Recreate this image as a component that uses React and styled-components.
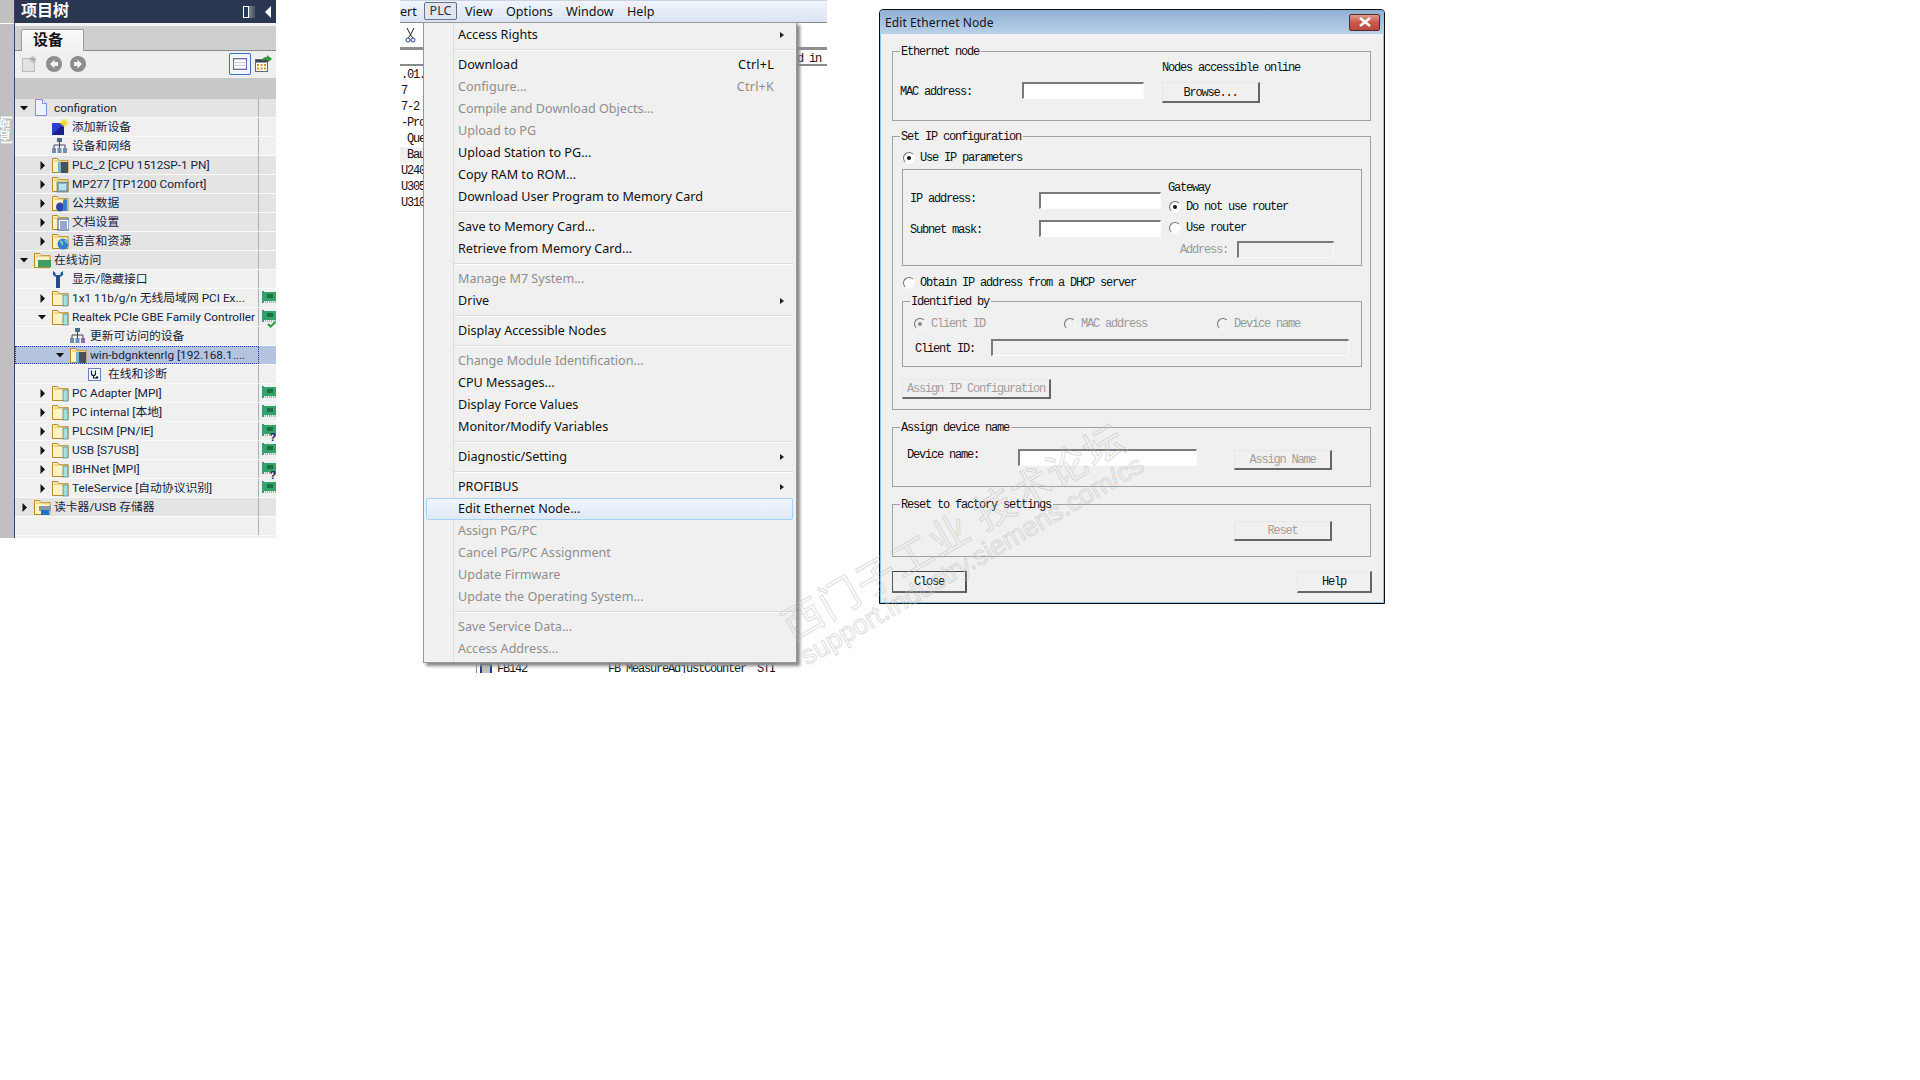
import React from 'react';
import styled, { createGlobalStyle } from 'styled-components';

const GlobalStyle = createGlobalStyle`
  html, body { margin: 0; padding: 0; background: #fff; }
  * { box-sizing: border-box; }
`;

const UI_FONT = `"Noto Sans", "Noto Sans CJK SC", sans-serif`;
const TREE_FONT = `Roboto, "Noto Sans CJK SC", sans-serif`;
const OLD_FONT = `"Liberation Mono", "Noto Sans CJK SC", monospace`;

// ---- small drawings ----

const Triangle = ({ open }) => (
  <svg width="9" height="9" viewBox="0 0 9 9">
    {open ? <path d="M0 2h8L4 6.500z" fill="#111" /> : <path d="M2.500 0v9L7 4.500z" fill="#111" />}
  </svg>
);

const Inner = ({ kind }) => {
  switch (kind) {
    case 'cpu':
      return <><rect x="6" y="6" width="10" height="11" fill="#46525e" /><rect x="6" y="6" width="3" height="11" fill="#7fb0c4" /></>;
    case 'hmi':
      return <><rect x="5" y="7" width="11" height="10" fill="#8fa9b8" stroke="#566" strokeWidth=".6" /><rect x="7" y="9" width="7" height="6" fill="#b8e6e8" /></>;
    case 'db':
      return <><ellipse cx="8" cy="13" rx="4" ry="4.500" fill="#2a48b0" /><rect x="11" y="5" width="4" height="12" rx="2" fill="#2f7fd0" /></>;
    case 'doc':
      return <><rect x="6" y="6" width="11" height="11" fill="#fff" stroke="#34508a" /><path d="M8 9h7M8 11h7M8 13h7M8 15h7" stroke="#34508a" /></>;
    case 'globe':
      return <><circle cx="11" cy="12" r="5.500" fill="#2f80d8" /><path d="M8 9c2 1 3 2 2 4M13 8c1 2 2 3 3 3" stroke="#9fe0a8" strokeWidth="1.400" fill="none" /></>;
    case 'nic':
      return <><rect x="4" y="9" width="13" height="7" fill="#3f9c64" /><path d="M5 16v1.500M7 16v1.500M9 16v1.500M11 16v1.500M13 16v1.500M15 16v1.500" stroke="#c9a23c" /></>;
    case 'reader':
      return <><rect x="5" y="8" width="12" height="5" fill="#8a9aa8" /><rect x="7" y="12" width="8" height="5" fill="#1f6fd0" /></>;
    default:
      return <><rect x="11" y="6" width="5" height="11" fill="#a6dfe0" stroke="#3f7f94" strokeWidth=".7" /></>;
  }
};

const FolderIcon = ({ kind }) => (
  <svg width="17" height="18" viewBox="0 0 17 18">
    <path d="M.5 16.500V2.500h5l1.500 2h9v12z" fill="#fdf2c4" stroke="#b58a2a" />
    <path d="M2 5h13" stroke="#e0b850" />
    <Inner kind={kind} />
  </svg>
);

const DocIcon = () => (
  <svg width="14" height="18" viewBox="0 0 14 18">
    <path d="M1.500 .5h7l4 4v12h-11z" fill="#eef2fc" stroke="#7f93d8" />
    <path d="M8.500 .5v4h4" fill="#fff" stroke="#7f93d8" />
  </svg>
);

const AddDeviceIcon = () => (
  <svg width="17" height="16" viewBox="0 0 17 16">
    <rect x="0" y="4" width="12" height="12" fill="#2c3fd0" />
    <path d="M0 16L12 4v12z" fill="#17208a" />
    <path d="M12 0v8M8 4h8M9.500 1.500l5 5M14.500 1.500l-5 5" stroke="#f5d820" strokeWidth="1.300" />
  </svg>
);

const NetworkIcon = ({ question }) => (
  <svg width="16" height="16" viewBox="0 0 16 16">
    <rect x="5" y="0" width="5" height="4" fill="#4a6a90" />
    <path d="M7.500 4v3M2 10V7h11v3M7.500 7v3" stroke="#445" fill="none" />
    <rect x="0" y="10" width="4" height="5" fill="#6f8fb5" />
    <rect x="5.500" y="10" width="4" height="5" fill="#6f8fb5" />
    <rect x="11" y="10" width="4" height="5" fill={question ? '#a060c0' : '#6f8fb5'} />
  </svg>
);

const WrenchIcon = () => (
  <svg width="12" height="17" viewBox="0 0 12 17">
    <path d="M1 0v4l3 2v11h4V6l3-2V0L8.500 2v2h-5V2z" fill="#1f4f8f" />
  </svg>
);

const DiagIcon = () => (
  <svg width="13" height="13" viewBox="0 0 13 13">
    <rect x=".5" y=".5" width="12" height="12" fill="#fff" stroke="#6a7fc0" />
    <path d="M3.500 2.500v3a2 2 0 004 0v-3M5.500 7.500v2.500h3" stroke="#123" strokeWidth="1.200" fill="none" />
    <circle cx="9" cy="9.500" r="1.200" fill="#123" />
  </svg>
);

const NicIcon = ({ mark }) => (
  <svg width="14" height="20" viewBox="0 0 14 20">
    <path d="M1 1v12" stroke="#0d7a50" strokeWidth="1.500" />
    <rect x="2" y="2" width="12" height="9" fill="#33a468" />
    <rect x="5" y="4" width="6" height="4" fill="#1d6f48" />
    <path d="M3 12h11" stroke="#d8b040" strokeWidth="2" strokeDasharray="1 1" />
    {mark === 'ok' && <path d="M6 15l2.500 2.500L13.500 13" stroke="#2f9c3f" strokeWidth="2" fill="none" />}
    {mark === 'q' && <text x="7.500" y="18" fontSize="11" fontWeight="700" fontFamily="Liberation Sans" fill="#10285a">?</text>}
  </svg>
);

const RoundNav = ({ back }) => (
  <svg width="16" height="16" viewBox="0 0 16 16">
    <circle cx="8" cy="8" r="8" fill="#8d8d8d" />
    <path d={back ? 'M8.500 3.500L4 8l4.500 4.500V10H12V6H8.500z' : 'M7.500 3.500L12 8l-4.500 4.500V10H4V6h3.500z'} fill="#f4f4f4" />
  </svg>
);

const NewGrayIcon = () => (
  <svg width="16" height="16" viewBox="0 0 16 16">
    <rect x=".5" y="2.500" width="12" height="13" fill="#e2e2e2" stroke="#bbb" />
    <path d="M11 0v7M7.500 3.500h7M8.500 1l5 5M13.500 1l-5 5" stroke="#a8a8a8" />
  </svg>
);

const TableGoIcon = () => (
  <svg width="17" height="18" viewBox="0 0 17 18">
    <rect x=".5" y="4.500" width="12" height="12" fill="#fff" stroke="#667" />
    <rect x="1" y="5" width="11" height="2.500" fill="#345" />
    <path d="M2 9h2v2H2zM5.500 9h2v2h-2zM9 9h2v2H9zM2 12.500h2v2H2zM5.500 12.500h2v2h-2zM9 12.500h2v2H9z" fill="#e08a20" />
    <path d="M7 6c0-3 2-4 5-4V0l5 4-5 4V5C10 5 8 5 7 6z" fill="#2f9a3f" />
  </svg>
);

const ColumnsIcon = () => (
  <svg width="12" height="12" viewBox="0 0 12 12">
    <rect x=".5" y=".5" width="5" height="11" fill="none" stroke="#fff" />
    <path d="M7 0v12" stroke="#c8c8c8" /><path d="M9 0v12" stroke="#9a9a9a" /><path d="M11 0v12" stroke="#6f7a8a" />
  </svg>
);

const Scissors = () => (
  <svg width="11" height="15" viewBox="0 0 11 15">
    <path d="M2 0l3.500 7M9 0L5.500 7M5.500 7L3 10M5.500 7L8 10" stroke="#222" fill="none" />
    <circle cx="3" cy="12" r="2" stroke="#2a3f8a" fill="none" /><circle cx="8" cy="12" r="2" stroke="#2a3f8a" fill="none" />
  </svg>
);

// ---- project tree data ----

const treeRows = [
  { level: 0, open: true, arrow: true, icon: <DocIcon />, text: 'configration', tone: 'head' },
  { level: 1, icon: <AddDeviceIcon />, text: '添加新设备', tone: 'light' },
  { level: 1, icon: <NetworkIcon />, text: '设备和网络', tone: 'light' },
  { level: 1, arrow: true, icon: <FolderIcon kind="cpu" />, text: 'PLC_2 [CPU 1512SP-1 PN]', tone: 'head' },
  { level: 1, arrow: true, icon: <FolderIcon kind="hmi" />, text: 'MP277 [TP1200 Comfort]', tone: 'head' },
  { level: 1, arrow: true, icon: <FolderIcon kind="db" />, text: '公共数据', tone: 'head' },
  { level: 1, arrow: true, icon: <FolderIcon kind="doc" />, text: '文档设置', tone: 'head' },
  { level: 1, arrow: true, icon: <FolderIcon kind="globe" />, text: '语言和资源', tone: 'head' },
  { level: 0, open: true, arrow: true, icon: <FolderIcon kind="nic" />, text: '在线访问', tone: 'head' },
  { level: 1, icon: <WrenchIcon />, text: '显示/隐藏接口', tone: 'light' },
  { level: 1, arrow: true, icon: <FolderIcon />, text: '1x1 11b/g/n 无线局域网 PCI Ex...', tone: 'light', badge: 'plain' },
  { level: 1, open: true, arrow: true, icon: <FolderIcon />, text: 'Realtek PCIe GBE Family Controller', tone: 'light', badge: 'ok' },
  { level: 2, icon: <NetworkIcon question />, text: '更新可访问的设备', tone: 'light' },
  { level: 2, open: true, arrow: true, icon: <FolderIcon kind="cpu" />, text: 'win-bdgnktenrlg [192.168.1....', tone: 'selected' },
  { level: 3, icon: <DiagIcon />, text: '在线和诊断', tone: 'light' },
  { level: 1, arrow: true, icon: <FolderIcon />, text: 'PC Adapter [MPI]', tone: 'light', badge: 'plain' },
  { level: 1, arrow: true, icon: <FolderIcon />, text: 'PC internal [本地]', tone: 'light', badge: 'plain' },
  { level: 1, arrow: true, icon: <FolderIcon />, text: 'PLCSIM [PN/IE]', tone: 'light', badge: 'q' },
  { level: 1, arrow: true, icon: <FolderIcon />, text: 'USB [S7USB]', tone: 'light', badge: 'plain' },
  { level: 1, arrow: true, icon: <FolderIcon />, text: 'IBHNet [MPI]', tone: 'light', badge: 'q' },
  { level: 1, arrow: true, icon: <FolderIcon />, text: 'TeleService [自动协议识别]', tone: 'light', badge: 'plain' },
  { level: 0, arrow: true, icon: <FolderIcon kind="reader" />, text: '读卡器/USB 存储器', tone: 'head' },
  { level: 0, text: '', tone: 'light' },
];

const rowColors = { head: '#e4e4e4', light: '#f0f0f0', selected: '#b4c3de' };
const hasCjk = (text) => /[\u4e00-\u9fff]/.test(text);

// ---- PLC menu data ----

const menuGroups = [
  [{ label: 'Access Rights', sub: true }],
  [
    { label: 'Download', keys: 'Ctrl+L' },
    { label: 'Configure...', keys: 'Ctrl+K', off: true },
    { label: 'Compile and Download Objects...', off: true },
    { label: 'Upload to PG', off: true },
    { label: 'Upload Station to PG...' },
    { label: 'Copy RAM to ROM...' },
    { label: 'Download User Program to Memory Card' },
  ],
  [{ label: 'Save to Memory Card...' }, { label: 'Retrieve from Memory Card...' }],
  [{ label: 'Manage M7 System...', off: true }, { label: 'Drive', sub: true }],
  [{ label: 'Display Accessible Nodes' }],
  [
    { label: 'Change Module Identification...', off: true },
    { label: 'CPU Messages...' },
    { label: 'Display Force Values' },
    { label: 'Monitor/Modify Variables' },
  ],
  [{ label: 'Diagnostic/Setting', sub: true }],
  [
    { label: 'PROFIBUS', sub: true },
    { label: 'Edit Ethernet Node...', hot: true },
    { label: 'Assign PG/PC', off: true },
    { label: 'Cancel PG/PC Assignment', off: true },
    { label: 'Update Firmware', off: true },
    { label: 'Update the Operating System...', off: true },
  ],
  [{ label: 'Save Service Data...', off: true }, { label: 'Access Address...', off: true }],
];

const codeLines = ['.01.', '7', '7-2', '-Pro', ' Que', ' Bau', 'U240', 'U305', 'U310'];

// ---- main component ----

const App = () => (
  <Page>
    <GlobalStyle />
    <TreePanel>
      <Strip>
        <StripCap />
        <StripLabel>[启动]</StripLabel>
      </Strip>
      <TreeMain>
        <TreeHeader>
          <span>项目树</span>
          <HeaderIcons>
            <ColumnsIcon />
            <CollapseArrow />
          </HeaderIcons>
        </TreeHeader>
        <TabStrip>
          <Tab>设备</Tab>
        </TabStrip>
        <TreeToolbar>
          <NewGrayIcon />
          <RoundNav back />
          <RoundNav />
          <ViewButton>
            <ViewGlyph />
          </ViewButton>
          <TableGoIcon />
        </TreeToolbar>
        <TreeGrayBand />
        {treeRows.map((row, i) => (
          <TreeRow key={i} $tone={row.tone}>
            <TreeCell $level={row.level} $selected={row.tone === 'selected'}>
              <ArrowBox>{row.arrow && <Triangle open={row.open} />}</ArrowBox>
              <IconBox>{row.icon}</IconBox>
              <TreeText $raised={hasCjk(row.text)}>{row.text}</TreeText>
            </TreeCell>
            <BadgeCell>{row.badge && <NicIcon mark={row.badge} />}</BadgeCell>
          </TreeRow>
        ))}
      </TreeMain>
    </TreePanel>

    <PlcWindow>
      <MenuBar>
        <MenuBarItem $w={24}>ert</MenuBarItem>
        <ActiveMenu>PLC</ActiveMenu>
        <MenuBarItem $w={41} $pad={8}>View</MenuBarItem>
        <MenuBarItem $w={60} $pad={8}>Options</MenuBarItem>
        <MenuBarItem $w={61} $pad={8}>Window</MenuBarItem>
        <MenuBarItem $w={40} $pad={8}>Help</MenuBarItem>
      </MenuBar>
      <ToolStrip>
        <Scissors />
      </ToolStrip>
      <CodeHeader>d in I</CodeHeader>
      <CodeList>
        {codeLines.map((line, i) => (
          <CodeLine key={i} $marked={i === 5}>{line}</CodeLine>
        ))}
      </CodeList>
      <BottomCode>
        <FbIcon />
        <span>FB142</span>
        <FbName>FB MeasureAdjustCounter</FbName>
        <span>STI</span>
      </BottomCode>
      <PopupMenu>
        {menuGroups.map((group, g) => (
          <MenuGroup key={g} $first={g === 0}>
            {group.map((item) => (
              <MenuItem key={item.label} $off={item.off} $hot={item.hot}>
                <span>{item.label}</span>
                {item.keys && <Shortcut>{item.keys}</Shortcut>}
                {item.sub && <SubArrow />}
              </MenuItem>
            ))}
          </MenuGroup>
        ))}
      </PopupMenu>
    </PlcWindow>

    <Dialog>
      <TitleBar>
        <span>Edit Ethernet Node</span>
        <CloseButton>
          <svg width="14" height="10" viewBox="0 0 14 10">
            <path d="M2 1l10 8M12 1L2 9" stroke="#fff" strokeWidth="2.600" />
          </svg>
        </CloseButton>
      </TitleBar>
      <DialogBody>
        <Group $h={77}>
          <Legend>Ethernet node</Legend>
          <GroupPad $left={7}>
            <Hint>Nodes accessible online</Hint>
            <FieldRow $mt={7}>
              <FieldLabel $w={122} $lh={20}>MAC address:</FieldLabel>
              <Field $w={122} />
              <DlgButton $w={98} $h={21} $ml={18}>Browse...</DlgButton>
            </FieldRow>
          </GroupPad>
        </Group>

        <Group $h={281} $mt={8}>
          <Legend>Set IP configuration</Legend>
          <GroupPad $left={9}>
            <RadioRow $mt={8} $left={1}>
              <Radio $on />
              <span>Use IP parameters</span>
            </RadioRow>
            <InnerBox $mt={4}>
              <AddressColumn>
                <FieldRow>
                  <FieldLabel $w={129} $lh={15}>IP address:</FieldLabel>
                  <Field $w={122} />
                </FieldRow>
                <FieldRow $mt={11}>
                  <FieldLabel $w={129} $lh={20}>Subnet mask:</FieldLabel>
                  <Field $w={122} />
                </FieldRow>
              </AddressColumn>
              <GatewayColumn>
                <PlainLine>Gateway</PlainLine>
                <RadioRow $mt={5} $left={1}>
                  <Radio $on />
                  <span>Do not use router</span>
                </RadioRow>
                <RadioRow $mt={7} $left={1}>
                  <Radio />
                  <span>Use router</span>
                </RadioRow>
                <FieldRow $mt={6}>
                  <FieldLabel $w={69} $left={12} $off>Address:</FieldLabel>
                  <Field $w={97} $off />
                </FieldRow>
              </GatewayColumn>
            </InnerBox>
            <RadioRow $mt={10} $left={1}>
              <Radio />
              <span>Obtain IP address from a DHCP server</span>
            </RadioRow>
            <Group $h={73} $w={460} $mt={4}>
              <Legend>Identified by</Legend>
              <IdentifyRadios>
                <RadioRow $w={150} $off>
                  <Radio $on $off />
                  <span>Client ID</span>
                </RadioRow>
                <RadioRow $w={153} $off>
                  <Radio $off />
                  <span>MAC address</span>
                </RadioRow>
                <RadioRow $off>
                  <Radio $off />
                  <span>Device name</span>
                </RadioRow>
              </IdentifyRadios>
              <FieldRow $mt={8} $left={12}>
                <FieldLabel $w={76} $lh={20}>Client ID:</FieldLabel>
                <Field $w={358} $off />
              </FieldRow>
            </Group>
            <DlgButton $w={149} $h={20} $mt={12} $off>Assign IP Configuration</DlgButton>
          </GroupPad>
        </Group>

        <Group $h={67} $mt={10}>
          <Legend>Assign device name</Legend>
          <GroupPad $left={14}>
            <FieldRow $mt={15}>
              <FieldLabel $w={111} $lh={13}>Device name:</FieldLabel>
              <Field $w={179} />
              <DlgButton $w={98} $h={20} $ml={37} $mt={1} $off>Assign Name</DlgButton>
            </FieldRow>
          </GroupPad>
        </Group>

        <Group $h={60} $mt={10}>
          <Legend>Reset to factory settings</Legend>
          <GroupPad $left={341}>
            <DlgButton $w={98} $h={20} $mt={10} $off>Reset</DlgButton>
          </GroupPad>
        </Group>

        <DialogFooter>
          <DlgButton $w={75} $h={22} $strong>Close</DlgButton>
          <DlgButton $w={75} $h={22}>Help</DlgButton>
        </DialogFooter>
      </DialogBody>
    </Dialog>

    <Watermark>
      <WatermarkBig>西门子工业 技术论坛</WatermarkBig>
      <WatermarkSmall>support.industry.siemens.com/cs</WatermarkSmall>
    </Watermark>
  </Page>
);

// ---- styled components ----

const Page = styled.div`
  position: relative;
  display: flex;
  align-items: flex-start;
  width: 1920px;
  height: 1080px;
  background: #fff;
  overflow: hidden;
`;

/* left tree panel */
const TreePanel = styled.div`
  display: flex;
  width: 276px;
  height: 538px;
  flex: none;
  font-family: ${TREE_FONT};
`;

const Strip = styled.div`
  width: 15px;
  background: #c0c0c0;
  border-right: 1px solid #39455c;
  display: flex;
  flex-direction: column;
`;

const StripCap = styled.div`
  height: 24px;
  border-bottom: 1px solid #fff;
`;

const StripLabel = styled.div`
  margin-top: 92px;
  writing-mode: vertical-rl;
  transform: rotate(180deg);
  color: #fff;
  font-size: 11px;
  line-height: 14px;
  font-weight: 700;
`;

const TreeMain = styled.div`
  flex: 1;
  min-width: 0;
  background: #f0f0f0;
  overflow: hidden;
`;

const TreeHeader = styled.div`
  height: 23px;
  background: #2b3650;
  color: #fff;
  font-size: 16px;
  font-weight: 700;
  line-height: 19px;
  padding: 0 5px 2px 6px;
  display: flex;
  justify-content: space-between;
  align-items: center;
`;

const HeaderIcons = styled.div`
  display: flex;
  align-items: center;
  gap: 10px;
  margin-top: 2px;
`;

const CollapseArrow = styled.i`
  width: 0;
  height: 0;
  border-style: solid;
  border-width: 6px 6px 6px 0;
  border-color: transparent #fff transparent transparent;
`;

const TabStrip = styled.div`
  height: 28px;
  padding: 6px 0 0 6px;
  background: linear-gradient(#f2f2f2 0 3px, #cfcfcf 3px);
  border-bottom: 1px solid #8a8a8a;
`;

const Tab = styled.div`
  width: 63px;
  height: 22px;
  padding-left: 11px;
  background: linear-gradient(#fbfbfb, #f0f0f0);
  border: 1px solid #9a9a9a;
  border-bottom: none;
  border-radius: 2px 2px 0 0;
  font-size: 15px;
  font-weight: 700;
  line-height: 20px;
  color: #111;
`;

const TreeToolbar = styled.div`
  height: 25px;
  margin-bottom: 2px;
  background: #efefef;
  display: flex;
  align-items: center;
  gap: 8px;
  padding: 0 4px 0 7px;
`;

const ViewButton = styled.div`
  margin-left: auto;
  width: 22px;
  height: 22px;
  margin-right: -4px;
  border: 1px solid #3a6fc8;
  border-radius: 2px;
  background: #f4f6fb;
  display: flex;
  align-items: center;
  justify-content: center;
`;

const ViewGlyph = styled.i`
  width: 14px;
  height: 12px;
  border: 1px solid #6a6fb0;
  background: repeating-linear-gradient(#c8cee8 0 1px, #fff 1px 3px);
`;

const TreeGrayBand = styled.div`
  height: 21px;
  background: #c8c8c8;
`;

const TreeRow = styled.div`
  display: flex;
  height: 19px;
  border-bottom: 1px solid #fafafa;
  background: ${({ $tone }) => rowColors[$tone]};
`;

const TreeCell = styled.div`
  width: 244px;
  flex: none;
  display: flex;
  align-items: center;
  padding-left: ${({ $level }) => $level * 18}px;
  border-right: 1px solid #b0b0b0;
  outline: ${({ $selected }) => ($selected ? '1px dotted #1f3fa0' : 'none')};
  outline-offset: -1px;
`;

const ArrowBox = styled.div`
  width: 19px;
  flex: none;
  display: flex;
  justify-content: center;
`;

const IconBox = styled.div`
  width: 20px;
  flex: none;
  display: flex;
  align-items: center;
`;

const TreeText = styled.span`
  font-size: 11.8px;
  line-height: 16px;
  padding-bottom: ${({ $raised }) => ($raised ? 1 : 0)}px;
  color: #16233c;
  white-space: nowrap;
  overflow: hidden;
`;

const BadgeCell = styled.div`
  flex: 1;
  padding: 1px 0 0 3px;
  height: 18px;
`;

/* PLC window behind the menu */
const PlcWindow = styled.div`
  position: relative;
  flex: none;
  width: 427px;
  height: 673px;
  margin-left: 124px;
  overflow: hidden;
`;

const MenuBar = styled.div`
  height: 22px;
  padding-bottom: 1px;
  display: flex;
  align-items: center;
  background: linear-gradient(#f0f4fb, #dbe4f2);
  border-top: 1px solid #c8d4e4;
  font-family: ${UI_FONT};
  font-size: 12.6px;
  color: #111;
`;

const MenuBarItem = styled.span`
  width: ${({ $w }) => $w}px;
  padding-left: ${({ $pad }) => $pad || 0}px;
`;

const ActiveMenu = styled.span`
  width: 33px;
  height: 18px;
  line-height: 15px;
  text-align: center;
  border: 1px solid #6a7280;
  border-radius: 2px;
  background: #dfe6f2;
  color: #334;
`;

const ToolStrip = styled.div`
  height: 28px;
  padding: 5px 0 0 5px;
  background: #fff;
  border-top: 1px solid #888;
  border-bottom: 3px solid #8f8f8f;
`;

const CodeHeader = styled.div`
  height: 16px;
  font-family: ${OLD_FONT};
  font-size: 12px;
  letter-spacing: -1.2px;
  line-height: 18px;
  padding-left: 397px;
  white-space: pre;
  color: #111;
  box-shadow: inset 0 -2px 0 #8a8a8a;
`;

const CodeList = styled.div`
  padding-top: 1px;
`;

const CodeLine = styled.div`
  width: 23px;
  height: 16px;
  overflow: hidden;
  padding-left: 1px;
  font-family: ${OLD_FONT};
  font-size: 12px;
  letter-spacing: -1.2px;
  line-height: 16px;
  white-space: pre;
  color: #111;
  background: ${({ $marked }) => ($marked ? '#f0f0f0' : 'transparent')};
`;

const BottomCode = styled.div`
  margin: 451px 0 0 76px;
  height: 14px;
  display: flex;
  align-items: center;
  gap: 5px;
  border-left: 1px solid #888;
  padding-left: 3px;
  font-family: ${OLD_FONT};
  font-size: 12px;
  letter-spacing: -1.2px;
  color: #111;
  white-space: pre;
`;

const FbIcon = styled.i`
  width: 12px;
  height: 12px;
  background: #c0c0c0;
  border: 2px solid #223a8a;
`;

const FbName = styled.span`
  margin: 0 6px 0 76px;
`;

const PopupMenu = styled.div`
  position: absolute;
  top: 22px;
  left: 23px;
  width: 374px;
  height: 641px;
  padding: 1px;
  background: linear-gradient(90deg, #f0f0f0 29px, #dcdcdc 29px 30px, #f0f0f0 30px);
  border: 1px solid #979797;
  box-shadow: 3px 3px 3px #888;
  font-family: ${UI_FONT};
  font-size: 12.6px;
`;

const MenuGroup = styled.div`
  margin-top: ${({ $first }) => ($first ? 0 : 8)}px;
  position: relative;

  &::before {
    content: ${({ $first }) => ($first ? 'none' : '""')};
    position: absolute;
    top: -5px;
    left: 29px;
    right: 2px;
    height: 2px;
    background: linear-gradient(#dcdcdc 50%, #fff 50%);
  }
`;

const MenuItem = styled.div`
  position: relative;
  height: 22px;
  line-height: 20px;
  margin: 0 2px 0 1px;
  padding: 0 18px 0 31px;
  display: flex;
  justify-content: space-between;
  color: ${({ $off }) => ($off ? '#8e8e8e' : '#111')};
  border: 1px solid ${({ $hot }) => ($hot ? '#a8d0f8' : 'transparent')};
  border-radius: 2px;
  background: ${({ $hot }) => ($hot ? 'linear-gradient(#f2f6fc, #dfeaf7)' : 'transparent')};
`;

const Shortcut = styled.span`
  letter-spacing: 0.2px;
`;

const SubArrow = styled.i`
  position: absolute;
  right: 8px;
  top: 7px;
  width: 0;
  height: 0;
  border-style: solid;
  border-width: 3.5px 0 3.5px 4px;
  border-color: transparent transparent transparent #222;
`;

/* dialog */
const Dialog = styled.div`
  flex: none;
  width: 506px;
  height: 595px;
  margin: 9px 0 0 52px;
  background: #f0f0f0;
  border: 1px solid #101010;
  border-radius: 4px 4px 0 0;
  box-shadow: inset 0 0 0 1px #8cc4e4;
  font-family: ${OLD_FONT};
  font-size: 12px;
  letter-spacing: -1.2px;
  color: #111;
  white-space: pre;
`;

const TitleBar = styled.div`
  height: 24px;
  background: linear-gradient(#8fafd3, #b9d1e9);
  border-radius: 3px 3px 0 0;
  display: flex;
  align-items: center;
  justify-content: space-between;
  padding: 0 4px 0 5px;
  font-family: ${UI_FONT};
  font-size: 12px;
  letter-spacing: 0.1px;
  color: #141414;
`;

const CloseButton = styled.div`
  width: 31px;
  height: 17px;
  border: 1px solid #5a2a2a;
  border-radius: 2px;
  background: linear-gradient(#e09a8c, #c9584a 50%, #b84a40);
  display: flex;
  align-items: center;
  justify-content: center;
`;

const DialogBody = styled.div`
  padding: 10px 12px 0;
`;

const Group = styled.fieldset`
  margin: ${({ $mt }) => $mt || 0}px 0 0;
  padding: 0;
  min-width: 0;
  width: ${({ $w }) => $w || 479}px;
  height: ${({ $h }) => $h}px;
  border: 1px solid #a0a0a0;
`;

const Legend = styled.legend`
  margin-left: 7px;
  padding: 2px 2px 0 1px;
  line-height: 12px;
  font-size: inherit;
`;

const GroupPad = styled.div`
  padding-left: ${({ $left }) => $left}px;
`;

const Hint = styled.div`
  margin: 3px 0 0 262px;
  line-height: 14px;
`;

const FieldRow = styled.div`
  display: flex;
  align-items: flex-start;
  margin-top: ${({ $mt }) => $mt || 0}px;
  padding-left: ${({ $left }) => $left || 0}px;
`;

const FieldLabel = styled.span`
  flex: none;
  width: ${({ $w }) => $w}px;
  padding-left: ${({ $left }) => $left || 0}px;
  line-height: ${({ $lh }) => $lh || 18}px;
  color: ${({ $off }) => ($off ? '#9a9a9a' : '#111')};
`;

const Field = styled.div`
  flex: none;
  width: ${({ $w }) => $w}px;
  height: 17px;
  background: ${({ $off }) => ($off ? '#f0f0f0' : '#fff')};
  border-style: solid;
  border-width: 2px 1px 1px 2px;
  border-color: #7a7a7a #fbfbfb #fbfbfb #7a7a7a;
`;

const DlgButton = styled.div`
  flex: none;
  width: ${({ $w }) => $w}px;
  height: ${({ $h }) => $h}px;
  margin-left: ${({ $ml }) => $ml || 0}px;
  margin-top: ${({ $mt }) => $mt || 0}px;
  line-height: ${({ $h }) => $h - 1}px;
  text-align: center;
  background: #f0f0f0;
  color: ${({ $off }) => ($off ? '#a0a0a0' : '#111')};
  border-style: solid;
  border-width: 1px 2px 2px 1px;
  border-color: ${({ $strong }) => ($strong ? '#444 #555 #666 #555' : '#e8e8e8 #666 #666 #e8e8e8')};
`;

const RadioRow = styled.div`
  display: flex;
  align-items: center;
  gap: 5px;
  height: 14px;
  line-height: 14px;
  width: ${({ $w }) => ($w ? `${$w}px` : 'auto')};
  margin-top: ${({ $mt }) => $mt || 0}px;
  padding-left: ${({ $left }) => $left || 0}px;
  color: ${({ $off }) => ($off ? '#9a9a9a' : '#111')};
`;

const Radio = styled.i`
  position: relative;
  flex: none;
  width: 12px;
  height: 12px;
  border-radius: 50%;
  background: ${({ $off }) => ($off ? '#f0f0f0' : '#fff')};
  border: 1px solid;
  border-color: #707070 #f8f8f8 #f8f8f8 #707070;

  &::after {
    content: ${({ $on }) => ($on ? '""' : 'none')};
    position: absolute;
    left: 3px;
    top: 3px;
    width: 4px;
    height: 4px;
    border-radius: 50%;
    background: ${({ $off }) => ($off ? '#8a8a8a' : '#111')};
  }
`;

const InnerBox = styled.div`
  display: flex;
  width: 460px;
  height: 97px;
  margin-top: ${({ $mt }) => $mt || 5}px;
  border: 1px solid #a0a0a0;
`;

const AddressColumn = styled.div`
  padding: 22px 0 0 7px;
  width: 265px;
`;

const GatewayColumn = styled.div`
  padding-top: 11px;
`;

const PlainLine = styled.div`
  line-height: 14px;
`;

const IdentifyRadios = styled.div`
  display: flex;
  margin-top: 9px;
  padding-left: 11px;
`;

const DialogFooter = styled.div`
  display: flex;
  justify-content: space-between;
  width: 480px;
  margin-top: 14px;
`;

/* forum watermark lying over everything */
const Watermark = styled.div`
  position: absolute;
  left: 762px;
  top: 493px;
  width: 440px;
  transform: rotate(-30deg);
  pointer-events: none;
  font-family: "Noto Sans CJK SC", "Noto Sans", sans-serif;
  color: transparent;
  white-space: nowrap;
`;

const WatermarkBig = styled.div`
  font-size: 40px;
  letter-spacing: 2px;
  line-height: 44px;
  -webkit-text-stroke: 1px rgba(190, 190, 190, 0.5);
`;

const WatermarkSmall = styled.div`
  font-family: "Liberation Sans", sans-serif;
  font-size: 27px;
  line-height: 28px;
  -webkit-text-stroke: 1px rgba(190, 190, 190, 0.5);
`;

export default App;
